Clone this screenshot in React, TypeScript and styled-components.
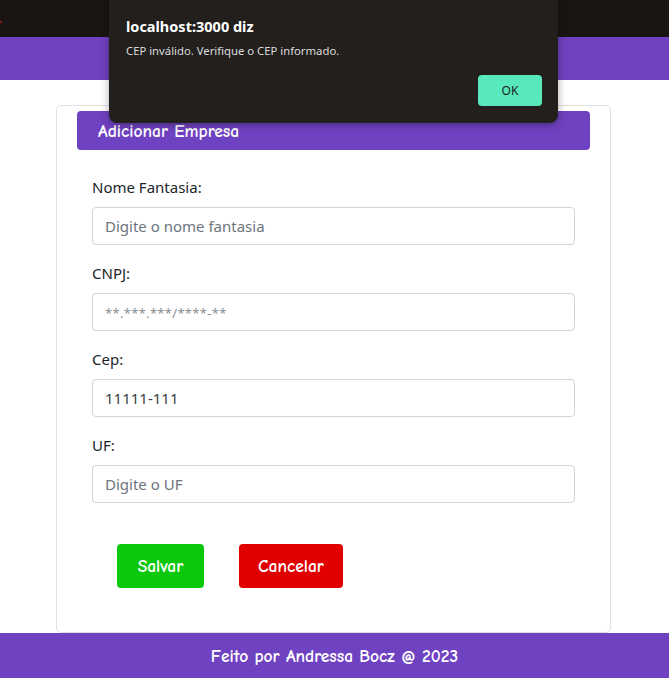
import React from "react";
import styled, { createGlobalStyle } from "styled-components";

const Global = createGlobalStyle`
  html, body { margin: 0; padding: 0; background: #fff; }
  body { font-family: "Segoe UI", "Noto Sans", "Open Sans", sans-serif; color: #212529; }
  * { box-sizing: border-box; }
`;

const fun = `"Comic Sans MS", "Comic Neue", "Lato", sans-serif`;

const Page = styled.div`
  position: relative;
  min-height: 688px;
  display: flex;
  flex-direction: column;
`;

const BrowserBar = styled.div`
  height: 37px;
  background: #181513;
  position: relative;
`;

const RedDot = styled.span`
  position: absolute;
  left: 0;
  top: 21px;
  width: 2px;
  height: 2px;
  background: #8a1a1a;
`;

const TopHeader = styled.header`
  height: 43px;
  background: #6f42c1;
`;

const Main = styled.main`
  padding-top: 25px;
  display: flex;
  justify-content: center;
`;

const Card = styled.section`
  width: 555px;
  margin-left: -2px;
  border: 1px solid #dfe1e4;
  border-radius: 5px;
  padding: 5px 20px 44px 20px;
`;

const CardHeader = styled.div`
  height: 39px;
  background: #6f42c1;
  border-radius: 4px;
  color: #fff;
  font-family: ${fun};
  font-weight: bold;
  font-size: 17.5px;
  display: flex;
  align-items: center;
  padding-left: 21px;
`;

const Form = styled.form`
  padding: 25px 15px 0 15px;
  display: flex;
  flex-direction: column;
`;

const Field = styled.div`
  display: flex;
  flex-direction: column;
  margin-bottom: 16px;
`;

const Label = styled.label`
  font-size: 15px;
  line-height: 24px;
  margin-bottom: 8px;
  color: #212529;
`;

const Input = styled.input`
  height: 38px;
  width: 100%;
  border: 1px solid #ced4da;
  border-radius: 4px;
  padding: 0 12px;
  font-family: inherit;
  font-size: 15px;
  color: #3a3f44;
  background: #fff;
  outline: none;
  &::placeholder { color: #6c757d; }
`;

const MaskInput = styled(Input)`
  &::placeholder { color: #8a9097; font-size: 13px; letter-spacing: 0.3px; }
`;

const Actions = styled.div`
  display: flex;
  gap: 35px;
  padding-left: 25px;
  margin-top: 25px;
`;

const Button = styled.button<{ $bg: string; $w: number }>`
  height: 44px;
  width: ${(p) => p.$w}px;
  background: ${(p) => p.$bg};
  border: none;
  border-radius: 4px;
  color: #fff;
  font-family: ${fun};
  font-weight: bold;
  font-size: 17.5px;
  cursor: pointer;
`;

const Footer = styled.footer`
  height: 45px;
  background: #6f42c1;
  color: #fff;
  font-family: ${fun};
  font-weight: bold;
  font-size: 17.5px;
  display: flex;
  align-items: center;
  justify-content: center;
`;

const Dialog = styled.div`
  position: absolute;
  left: 109px;
  top: 0;
  width: 449px;
  height: 123px;
  background: #221f1d;
  border-radius: 0 0 8px 8px;
  box-shadow: 0 2px 8px rgba(0, 0, 0, 0.35);
  padding: 16px 16px 17px 17px;
  display: flex;
  flex-direction: column;
  font-family: "Segoe UI", "Noto Sans", "Open Sans", sans-serif;
`;

const DialogTitle = styled.div`
  color: #fff;
  font-weight: bold;
  font-size: 14.5px;
  line-height: 20px;
`;

const DialogMessage = styled.div`
  color: #dcdcdc;
  font-size: 11.3px;
  line-height: 16px;
  margin-top: 7px;
`;

const DialogActions = styled.div`
  margin-top: auto;
  display: flex;
  justify-content: flex-end;
`;

const OkButton = styled.button`
  width: 64px;
  height: 31px;
  background: #57e9bc;
  border: none;
  border-radius: 4px;
  color: #1c1c1c;
  font-family: inherit;
  font-size: 12px;
`;

export default function App() {
  return (
    <>
      <Global />
      <Page>
        <BrowserBar>
          <RedDot />
        </BrowserBar>
        <TopHeader />
        <Main>
          <Card>
            <CardHeader>Adicionar Empresa</CardHeader>
            <Form onSubmit={(e) => e.preventDefault()}>
              <Field>
                <Label>Nome Fantasia:</Label>
                <Input placeholder="Digite o nome fantasia" />
              </Field>
              <Field>
                <Label>CNPJ:</Label>
                <MaskInput placeholder="**.***.***/****-**" />
              </Field>
              <Field>
                <Label>Cep:</Label>
                <Input defaultValue="11111-111" />
              </Field>
              <Field>
                <Label>UF:</Label>
                <Input placeholder="Digite o UF" />
              </Field>
              <Actions>
                <Button type="submit" $bg="#0cc80c" $w={87}>Salvar</Button>
                <Button type="button" $bg="#e00000" $w={104}>Cancelar</Button>
              </Actions>
            </Form>
          </Card>
        </Main>
        <Footer>Feito por Andressa Bocz @ 2023</Footer>
        <Dialog>
          <DialogTitle>localhost:3000 diz</DialogTitle>
          <DialogMessage>CEP inválido. Verifique o CEP informado.</DialogMessage>
          <DialogActions>
            <OkButton>OK</OkButton>
          </DialogActions>
        </Dialog>
      </Page>
    </>
  );
}
